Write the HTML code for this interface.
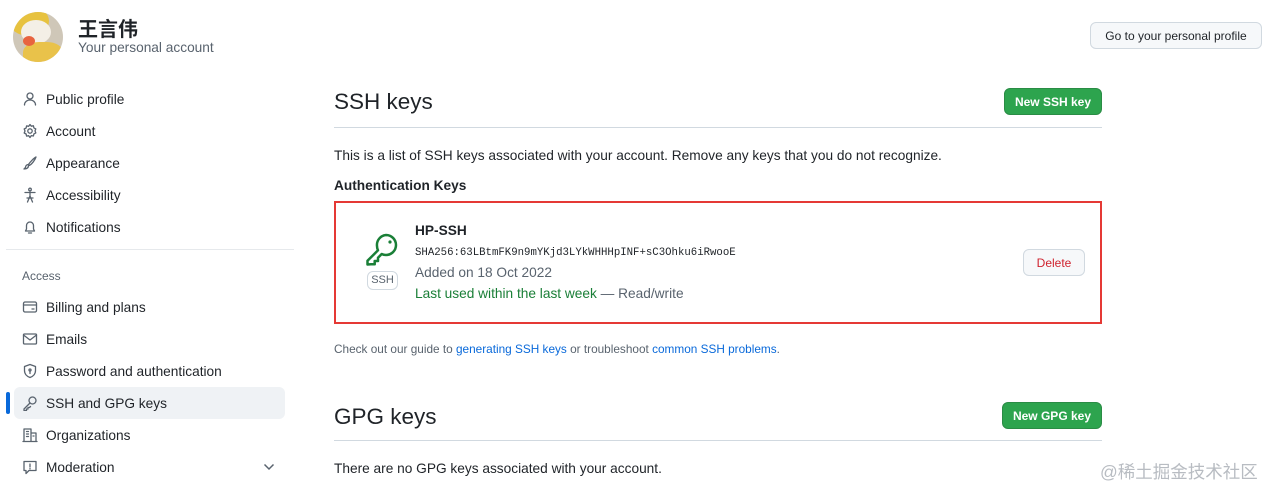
<!DOCTYPE html>
<html><head><meta charset="utf-8"><style>
*{box-sizing:border-box;margin:0;padding:0}
body{width:1271px;height:488px;overflow:hidden;background:#fff;font-family:"Liberation Sans","Noto Sans CJK SC",sans-serif;color:#1f2328;position:relative;font-size:13.7px}
.a{position:absolute;white-space:nowrap}
.nav{position:absolute;left:22px;height:20px;display:flex;align-items:center;font-size:13.7px;color:#1f2328}
.nav svg{width:16px;height:16px;margin-right:8px;fill:none;stroke:#59636e;stroke-width:1.3;stroke-linecap:round;stroke-linejoin:round}
.btn{position:absolute;border-radius:6px;font-size:12px;font-weight:bold;display:flex;align-items:center;justify-content:center}
.green{background:#2da44e;color:#fff;border:1px solid #2a8c45}
a{color:#0969da;text-decoration:none}
</style></head><body>
<div class="a" style="left:13px;top:12px;width:50px;height:50px;border-radius:50%;background:#cfc7b8;overflow:hidden">
 <div style="position:absolute;left:-4px;top:-6px;width:40px;height:30px;border-radius:50%;background:#e7c23f"></div>
 <div style="position:absolute;left:8px;top:8px;width:30px;height:24px;border-radius:50%;background:#f4efe6"></div>
 <div style="position:absolute;left:10px;top:30px;width:40px;height:26px;border-radius:40%;background:#e9c24a"></div>
 <div style="position:absolute;left:10px;top:24px;width:12px;height:10px;border-radius:50%;background:#e8633f"></div>
</div>
<div class="a" style="left:78px;top:13px;font-size:20px;font-weight:bold">王言伟</div>
<div class="a" style="left:78px;top:40px;font-size:13.7px;color:#59636e">Your personal account</div>
<div class="btn" style="left:1090px;top:22px;width:172px;height:27px;background:#f6f8fa;border:1px solid #d1d9e0;font-weight:normal;color:#1f2328">Go to your personal profile</div>

<div class="nav" style="top:89px"><svg viewBox="0 0 16 16"><circle cx="8" cy="5" r="3"/><path d="M2.5 14c0-3 2.5-5 5.5-5s5.5 2 5.5 5"/></svg>Public profile</div>
<div class="nav" style="top:121px"><svg viewBox="0 0 16 16"><circle cx="8" cy="8" r="2.2"/><path d="M8 1.5l1.3 1.7 2.1-.4.5 2.1 1.9 1-.8 2 .8 2-1.9 1-.5 2.1-2.1-.4L8 14.5l-1.3-1.8-2.1.4-.5-2.1-1.9-1 .8-2-.8-2 1.9-1 .5-2.1 2.1.4z"/></svg>Account</div>
<div class="nav" style="top:153px"><svg viewBox="0 0 16 16"><path d="M14 2c-2 1-6 5-7.5 7.5l1 1C10 9 13 5 14 2z"/><path d="M6.5 9.5c-2 0-3 1.5-3 3L2 14c2 0 4.5-.5 4.5-3.5"/></svg>Appearance</div>
<div class="nav" style="top:185px"><svg viewBox="0 0 16 16"><circle cx="8" cy="2.5" r="1.3"/><path d="M3 5.5h10M8 5v4M5.5 15l2.5-6 2.5 6M5 11h6"/></svg>Accessibility</div>
<div class="nav" style="top:217px"><svg viewBox="0 0 16 16"><path d="M3.5 12h9l-1-2V6.5a3.5 3.5 0 0 0-7 0V10z"/><path d="M6.5 14h3"/></svg>Notifications</div>
<div class="a" style="left:6px;top:249px;width:288px;height:1px;background:#e6e9ec"></div>
<div class="a" style="left:22px;top:269px;font-size:12px;color:#59636e">Access</div>
<div class="nav" style="top:297px"><svg viewBox="0 0 16 16"><rect x="1.5" y="3" width="13" height="10" rx="1.5"/><path d="M1.5 6h13M10 10h2"/></svg>Billing and plans</div>
<div class="nav" style="top:329px"><svg viewBox="0 0 16 16"><rect x="1.5" y="3" width="13" height="10" rx="1"/><path d="M1.5 4l6.5 5 6.5-5"/></svg>Emails</div>
<div class="nav" style="top:361px"><svg viewBox="0 0 16 16"><path d="M8 1.5l5.5 2v4c0 3.5-2.5 6-5.5 7-3-1-5.5-3.5-5.5-7v-4z"/><circle cx="8" cy="7" r="1"/><path d="M8 8v2.5"/></svg>Password and authentication</div>
<div class="a" style="left:14px;top:387px;width:271px;height:32px;background:#eff2f5;border-radius:6px"></div>
<div class="a" style="left:6px;top:392px;width:4px;height:22px;background:#0969da;border-radius:2px"></div>
<div class="nav" style="top:393px"><svg viewBox="0 0 16 16"><circle cx="10.5" cy="5.5" r="3.5"/><path d="M8 8l-6 6v1.5h2.5v-1.5h1.5V12.5h1.5l1-1"/></svg>SSH and GPG keys</div>
<div class="nav" style="top:425px"><svg viewBox="0 0 16 16"><path d="M2 14.5V2h7v12.5M9 6h5v8.5M1 14.5h14M4.5 4.5h2M4.5 7h2M4.5 9.5h2M11 9h1"/></svg>Organizations</div>
<div class="nav" style="top:457px"><svg viewBox="0 0 16 16"><path d="M2 2.5h12v9H7l-3 3v-3H2z"/><path d="M8 5v3M8 9.5v.5"/></svg>Moderation</div>
<svg class="a" style="left:263px;top:462px" width="12" height="10" viewBox="0 0 12 10"><path d="M1.5 2.5l4.5 4.5 4.5-4.5" fill="none" stroke="#59636e" stroke-width="1.5"/></svg>

<div class="a" style="left:334px;top:89px;font-size:22.5px">SSH keys</div>
<div class="btn green" style="left:1004px;top:88px;width:98px;height:27px">New SSH key</div>
<div class="a" style="left:334px;top:127px;width:768px;height:1px;background:#d1d9e0"></div>
<div class="a" style="left:334px;top:148px">This is a list of SSH keys associated with your account. Remove any keys that you do not recognize.</div>
<div class="a" style="left:334px;top:178px;font-weight:bold">Authentication Keys</div>
<div class="a" style="left:334px;top:201px;width:768px;height:123px;border:2.5px solid #e53935"></div>
<svg class="a" style="left:364px;top:232px" width="36" height="36" viewBox="0 0 36 36"><g fill="none" stroke="#1a7f37" stroke-width="2.5" stroke-linejoin="round" stroke-linecap="round"><path d="M22 3a10 10 0 0 1 0 20c-1.5 0-3-.3-4.3-1L14 25.7V29h-3.3v3.3H7L3.5 32.5v-3.7L14 18.3c-.7-1.3-1-2.8-1-4.3A10 10 0 0 1 22 3z"/></g><circle cx="26" cy="10" r="1.6" fill="#1a7f37"/></svg>
<div class="a" style="left:367px;top:271px;width:31px;height:19px;border:1px solid #d1d9e0;border-radius:6px;font-size:11px;color:#59636e;text-align:center;line-height:17px">SSH</div>
<div class="a" style="left:415px;top:223px;font-weight:bold">HP-SSH</div>
<div class="a" style="left:415px;top:247px;font-size:10.7px;font-family:'Liberation Mono',monospace">SHA256:63LBtmFK9n9mYKjd3LYkWHHHpINF+sC3Ohku6iRwooE</div>
<div class="a" style="left:415px;top:265px;color:#59636e">Added on 18 Oct 2022</div>
<div class="a" style="left:415px;top:286px;color:#59636e"><span style="color:#1a7f37">Last used within the last week</span> — Read/write</div>
<div class="btn" style="left:1023px;top:249px;width:62px;height:27px;background:#f6f8fa;border:1px solid #d1d9e0;color:#cf222e;font-weight:normal">Delete</div>
<div class="a" style="left:334px;top:342px;font-size:11.8px;color:#59636e">Check out our guide to <a>generating SSH keys</a> or troubleshoot <a>common SSH problems</a>.</div>

<div class="a" style="left:334px;top:404px;font-size:22.5px">GPG keys</div>
<div class="btn green" style="left:1002px;top:402px;width:100px;height:27px">New GPG key</div>
<div class="a" style="left:334px;top:440px;width:768px;height:1px;background:#d1d9e0"></div>
<div class="a" style="left:334px;top:461px">There are no GPG keys associated with your account.</div>
<div class="a" style="left:1100px;top:459px;font-size:17.5px;color:#b8bcc2">@稀土掘金技术社区</div>
</body></html>
